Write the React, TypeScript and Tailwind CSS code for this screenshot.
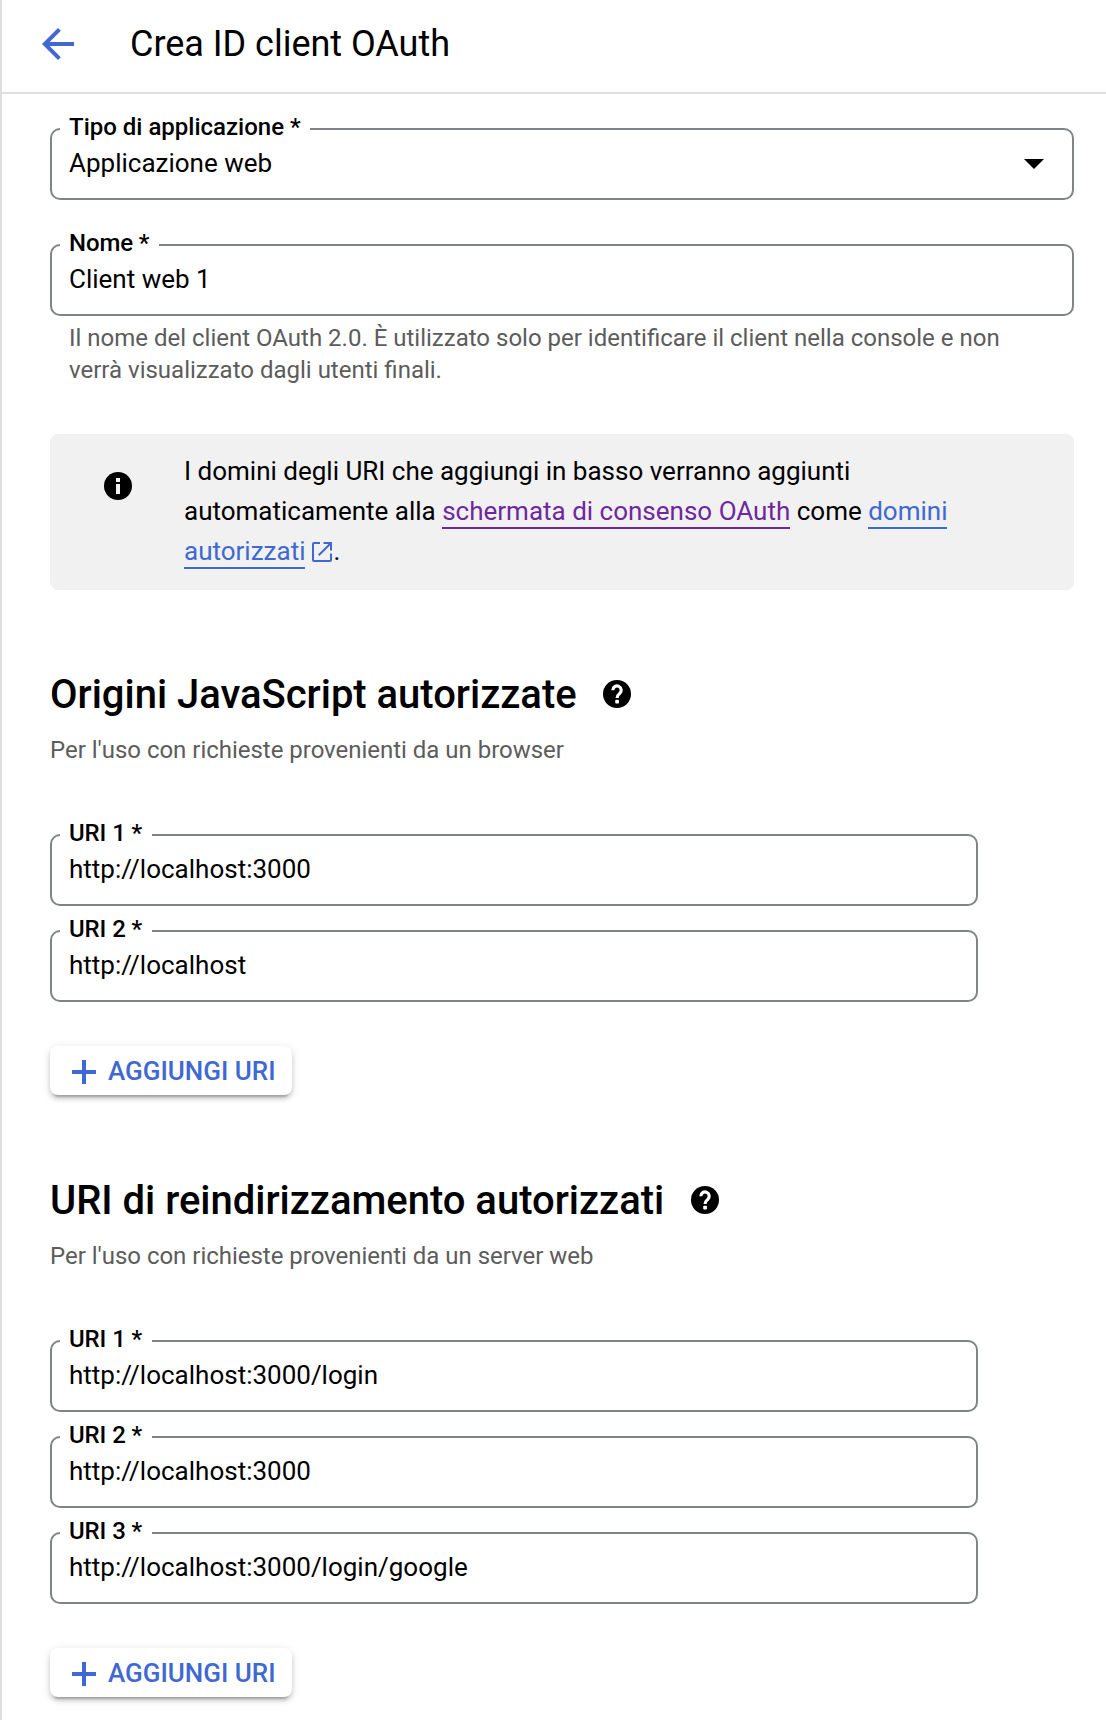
import type { ReactNode } from "react";

function BackArrow() {
  return (
    <svg className="size-12 shrink-0" viewBox="0 0 24 24" fill="#4068d2">
      <path d="M20 11H7.83l5.59-5.59L12 4l-8 8 8 8 1.41-1.41L7.83 13H20v-2z" />
    </svg>
  );
}

function InfoIcon() {
  return (
    <svg className="size-7 shrink-0" viewBox="0 0 28 28">
      <circle cx="14" cy="14" r="14" fill="#000" />
      <path d="M12 6h4v4h-4zM12 12h4v10h-4z" fill="#f1f1f1" />
    </svg>
  );
}

function HelpIcon() {
  return (
    <svg className="size-7 shrink-0" viewBox="0 0 28 28">
      <circle cx="14" cy="14" r="14" fill="#000" />
      <path
        d="M9.8 10.2a4.2 4.2 0 1 1 6.9 3.2c-1.5 1.3-2.6 2.1-2.6 4.6"
        fill="none"
        stroke="#fff"
        strokeWidth="3.2"
      />
      <rect x="12.2" y="19.8" width="3.8" height="3.8" rx="1" fill="#fff" />
    </svg>
  );
}

function ExternalIcon() {
  return (
    <svg
      className="mr-px ml-[7px] inline-block size-5 align-[-2px]"
      viewBox="0 0 20 20"
      fill="none"
      stroke="#4068d2"
      strokeWidth="2"
    >
      <path d="M8 1H2a1 1 0 0 0-1 1v16a1 1 0 0 0 1 1h16a1 1 0 0 0 1-1v-6.5M11.5 1H19v7.5M19 1L6.7 13.3" />
    </svg>
  );
}

function Field({ label, value, children }: { label: string; value: string; children?: ReactNode }) {
  const labelFit = label.length > 10 ? "tracking-normal pr-[9px]" : "tracking-[-0.1px] pr-[10px]";
  return (
    <div className="relative flex h-[72px] justify-between rounded-[10px] border-2 border-[#808488] pt-[13px] pr-7 pl-[17px]">
      <span
        className={`absolute -top-[15px] left-2 bg-white pl-[9px] text-[24px] leading-6 font-medium whitespace-nowrap ${labelFit}`}
      >
        {label}
      </span>
      <span className="text-[26px] leading-10">{value}</span>
      {children}
    </div>
  );
}

function AddButton() {
  return (
    <button className="mt-11 flex h-[49px] w-[242px] items-start rounded-lg bg-white pt-[5px] pl-[22px] text-[26px] leading-10 font-medium text-[#4068d2] shadow-[0_6px_2px_-4px_rgba(0,0,0,0.2),0_4px_4px_0_rgba(0,0,0,0.14),0_2px_10px_0_rgba(0,0,0,0.12)]">
      <svg className="mt-[9px] mr-3 size-6 shrink-0" viewBox="0 0 24 24" fill="currentColor">
        <path d="M10 0h4v10h10v4H14v10h-4V14H0v-4h10z" />
      </svg>
      <span className="whitespace-nowrap">AGGIUNGI URI</span>
    </button>
  );
}

function UriSection({ title, note, uris }: { title: string; note: string; uris: string[] }) {
  return (
    <section>
      <div className="flex h-12 gap-[26.5px]">
        <h2 className="pt-px text-[40px] leading-[48px] font-medium tracking-[-0.02px] whitespace-nowrap">{title}</h2>
        <div className="pt-[10px]">
          <HelpIcon />
        </div>
      </div>
      <p className="mt-4 text-[24px] leading-8 tracking-[-0.02px] text-[#5c5c5c]">{note}</p>
      <div className="mt-[68px] flex w-[928px] flex-col gap-6">
        {uris.map((uri, i) => (
          <Field key={uri} label={`URI ${i + 1} *`} value={uri} />
        ))}
      </div>
      <AddButton />
    </section>
  );
}

export default function App() {
  return (
    <div className="h-[1720px] w-[1106px] overflow-hidden border-l-2 border-[#e0e0e0] bg-white font-[Roboto,sans-serif] text-black">
      <header className="flex h-[94px] border-b-2 border-[#e0e0e0] pt-5 pl-8">
        <BackArrow />
        <h1 className="ml-12 text-[36px] leading-[48px] tracking-[-0.02px]">Crea ID client OAuth</h1>
      </header>
      <main className="w-[1072px] pt-[34px] pl-12">
        <div className="flex flex-col gap-11">
          <Field label="Tipo di applicazione *" value="Applicazione web">
            <svg className="mt-4 h-[10px] w-5" viewBox="0 0 20 10">
              <path d="M0 0h20L10 10z" />
            </svg>
          </Field>
          <Field label="Nome *" value="Client web 1" />
        </div>
        <p className="mt-[6px] pl-[19px] text-[24px] leading-8 whitespace-nowrap text-[#5c5c5c]">
          Il nome del client OAuth 2.0. È utilizzato solo per identificare il client nella console e non
          <br />
          verrà visualizzato dagli utenti finali.
        </p>
        <div className="mt-12 flex h-[156px] rounded-lg bg-[#f1f1f1] pl-[54px]">
          <div className="pt-[38px]">
            <InfoIcon />
          </div>
          <p className="ml-[52px] pt-[17px] text-[26px] leading-10 whitespace-nowrap">
            I domini degli URI che aggiungi in basso verranno aggiunti
            <br />
            automaticamente alla{" "}
            <a className="border-b-2 border-[#6f279f] pb-px text-[#6f279f]">schermata di consenso OAuth</a> come{" "}
            <a className="border-b-2 border-[#4068d2] pb-px text-[#4068d2]">domini</a>
            <br />
            <a className="border-b-2 border-[#4068d2] pb-px text-[#4068d2]">autorizzati</a>
            <ExternalIcon />.
          </p>
        </div>
        <div className="mt-20 flex flex-col gap-[81px]">
          <UriSection
            title="Origini JavaScript autorizzate"
            note="Per l'uso con richieste provenienti da un browser"
            uris={["http://localhost:3000", "http://localhost"]}
          />
          <UriSection
            title="URI di reindirizzamento autorizzati"
            note="Per l'uso con richieste provenienti da un server web"
            uris={["http://localhost:3000/login", "http://localhost:3000", "http://localhost:3000/login/google"]}
          />
        </div>
      </main>
    </div>
  );
}
